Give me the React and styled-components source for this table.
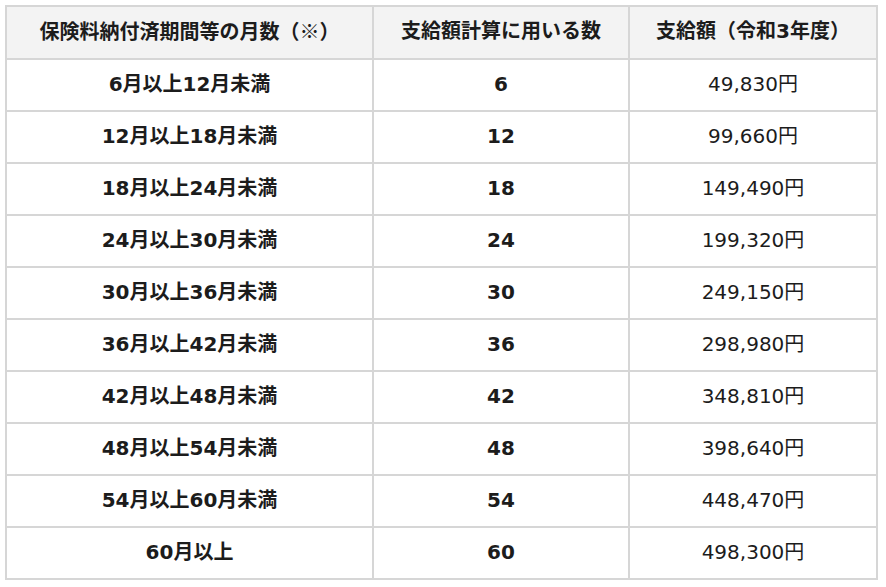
import React from "react";
import styled, { createGlobalStyle } from "styled-components";

const rows = [
  ["6月以上12月未満", "6", "49,830円"],
  ["12月以上18月未満", "12", "99,660円"],
  ["18月以上24月未満", "18", "149,490円"],
  ["24月以上30月未満", "24", "199,320円"],
  ["30月以上36月未満", "30", "249,150円"],
  ["36月以上42月未満", "36", "298,980円"],
  ["42月以上48月未満", "42", "348,810円"],
  ["48月以上54月未満", "48", "398,640円"],
  ["54月以上60月未満", "54", "448,470円"],
  ["60月以上", "60", "498,300円"],
];

const App = () => {
  return (
    <>
      <GlobalStyle />
      <Page>
        <Table>
          <colgroup>
            <col style={{ width: 367 }} />
            <col style={{ width: 256 }} />
            <col style={{ width: 248 }} />
          </colgroup>
          <thead>
            <tr>
              <HeadCell>
                保険料納付済期間等の月数<Cjk>（※）</Cjk>
              </HeadCell>
              <HeadCell>支給額計算に用いる数</HeadCell>
              <HeadCell>支給額（令和3年度）</HeadCell>
            </tr>
          </thead>
          <tbody>
            {rows.map(([months, count, amount]) => (
              <tr key={months}>
                <Cell $bold>{months}</Cell>
                <Cell $bold>{count}</Cell>
                <Cell>{amount}</Cell>
              </tr>
            ))}
          </tbody>
        </Table>
      </Page>
    </>
  );
};

const GlobalStyle = createGlobalStyle`
  body {
    margin: 0;
    background: #ffffff;
    font-family: "DejaVu Sans", "Noto Sans CJK JP", sans-serif;
  }
`;

const Page = styled.div`
  padding: 5px 0 0 5px;
`;

const Table = styled.table`
  width: 871px;
  border-collapse: collapse;
  table-layout: fixed;
  color: #1c1c1c;
  font-size: 20px;
  line-height: 24px;
`;

const HeadCell = styled.th`
  height: 48px;
  padding: 0 0 3px;
  background: #f3f3f3;
  border: 2px solid #d6d6d6;
  font-weight: 700;
  text-align: center;
  vertical-align: middle;
  white-space: nowrap;
`;

const Cjk = styled.span`
  font-family: "Noto Sans CJK JP", sans-serif;
`;

const Cell = styled.td`
  height: 47px;
  padding: 0 0 3px;
  border: 2px solid #d6d6d6;
  font-weight: ${(p) => (p.$bold ? 700 : 400)};
  text-align: center;
  vertical-align: middle;
  white-space: nowrap;
`;

export default App;
